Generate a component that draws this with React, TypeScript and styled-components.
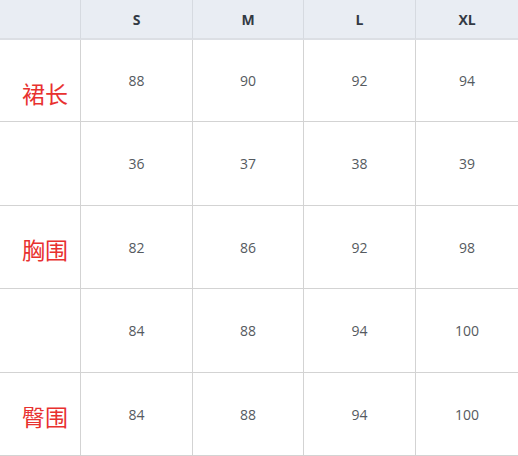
import React from "react";
import styled, { createGlobalStyle } from "styled-components";

const Global = createGlobalStyle`
  html, body { margin: 0; padding: 0; background: #fff; }
  body { font-family: "Open Sans", "Noto Sans", "Noto Sans CJK SC", sans-serif; }
`;

const Table = styled.div`
  width: 518px;
  display: grid;
  grid-template-columns: 80px 112px 111px 112px 103px;
  grid-template-rows: 40px 82px 84px 83px 84px 83px;
`;

const HeadCell = styled.div<{ $first?: boolean }>`
  background: #e9edf3;
  border-left: ${(p) => (p.$first ? "none" : "1px solid #d6dae0")};
  border-bottom: 2px solid #dcdfe4;
  display: flex;
  align-items: center;
  justify-content: center;
  font-weight: 700;
  font-size: 14px;
  color: #333a44;
`;

const Cell = styled.div`
  border-left: 1px solid #d3d3d3;
  border-bottom: 1px solid #d3d3d3;
  display: flex;
  align-items: center;
  justify-content: center;
  font-size: 14px;
  color: #555a60;
`;

const LabelCell = styled.div<{ $offset: number }>`
  border-bottom: 1px solid #d3d3d3;
  display: flex;
  align-items: center;
  justify-content: flex-end;
  padding: ${(p) => p.$offset}px 12px 0 0;
  font-family: "Noto Sans CJK SC", sans-serif;
  font-size: 23px;
  color: #e8312f;
`;

const sizes = ["S", "M", "L", "XL"];
const rows: { label: string; offset: number; values: string[] }[] = [
  { label: "裙长", offset: 24, values: ["88", "90", "92", "94"] },
  { label: "", offset: 0, values: ["36", "37", "38", "39"] },
  { label: "胸围", offset: 4, values: ["82", "86", "92", "98"] },
  { label: "", offset: 0, values: ["84", "88", "94", "100"] },
  { label: "臀围", offset: 4, values: ["84", "88", "94", "100"] },
];

export default function App() {
  return (
    <>
      <Global />
      <Table>
        <HeadCell $first />
        {sizes.map((s) => (
          <HeadCell key={s}>{s}</HeadCell>
        ))}
        {rows.map((r, i) => (
          <React.Fragment key={i}>
            <LabelCell $offset={r.offset}>{r.label}</LabelCell>
            {r.values.map((v, j) => (
              <Cell key={j}>{v}</Cell>
            ))}
          </React.Fragment>
        ))}
      </Table>
    </>
  );
}
